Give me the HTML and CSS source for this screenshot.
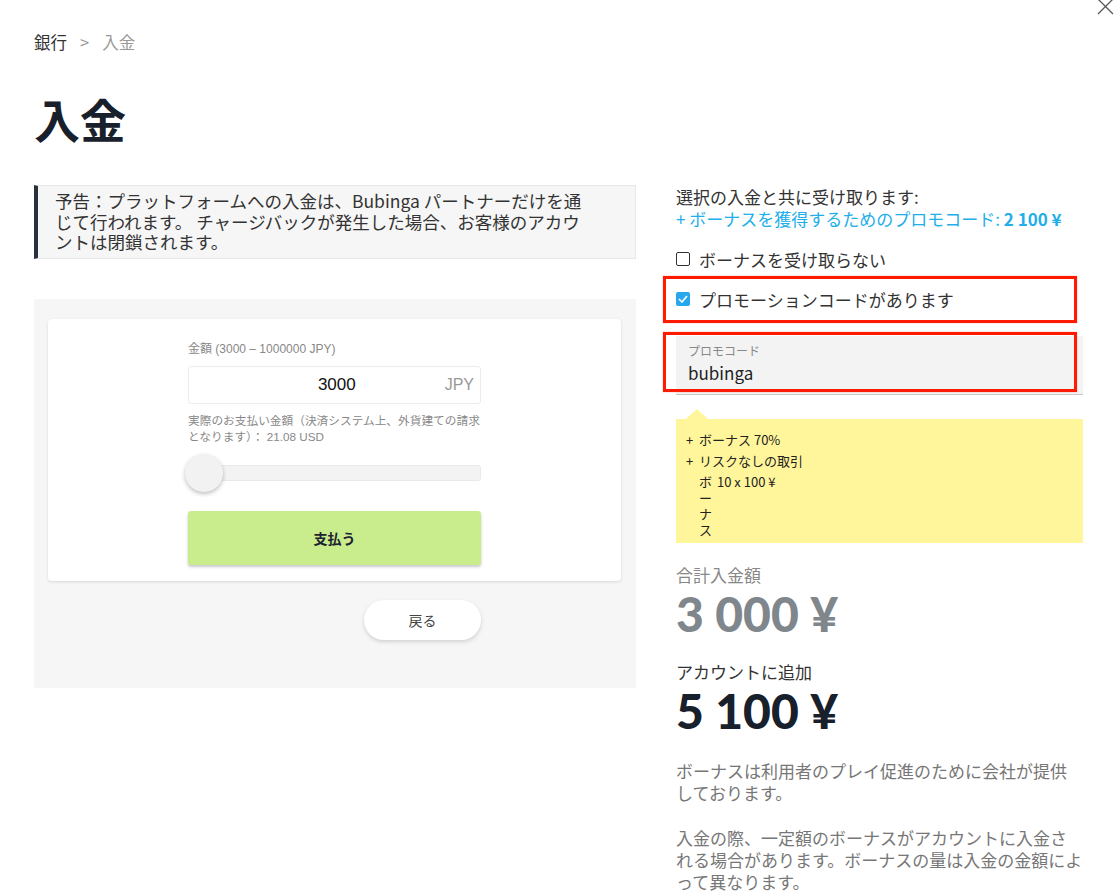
FILE: index.html
```html
<!DOCTYPE html>
<html lang="ja">
<head>
  <meta charset="UTF-8">
  <title>入金</title>
  <link rel="stylesheet" href="styles.css">
</head>
<body>

  <div class="modal">
    <button class="close-btn" aria-label="閉じる">
      <svg width="18" height="18" viewBox="0 0 18 18"><path d="M2 -1 L17 14 M17 -1 L2 14" stroke="#555" stroke-width="1.3" fill="none"/></svg>
    </button>

    <nav class="crumbs">
      <a href="#">銀行</a>
      <span class="sep">&gt;</span>
      <span class="current">入金</span>
    </nav>

    <h1 class="title">入金</h1>

    <div class="columns">
      <section class="left-col">
        <div class="notice">
          <p>予告：プラットフォームへの入金は、Bubinga パートナーだけを通じて行われます。 チャージバックが発生した場合、お客様のアカウントは閉鎖されます。</p>
        </div>

        <div class="pay-panel">
          <div class="pay-card">
            <form class="pay-form" id="payForm">
              <label class="field-label" for="amount">金額 (3000 – 1000000 JPY)</label>
              <div class="amount-box">
                <input id="amount" class="amount-input" value="3000">
                <span class="currency">JPY</span>
              </div>
              <p class="amount-note">実際のお支払い金額（決済システム上、外貨建ての請求となります）： 21.08 USD</p>
              <div class="slider">
                <div class="slider-track"></div>
                <div class="slider-thumb"></div>
              </div>
              <button type="submit" class="pay-btn">支払う</button>
            </form>
          </div>
          <div class="back-row">
            <button class="back-btn">戻る</button>
          </div>
        </div>
      </section>

      <section class="right-col">
        <div class="receive">選択の入金と共に受け取ります:</div>
        <div class="receive promo-link">+ ボーナスを獲得するためのプロモコード: <b>2 100 ¥</b></div>

        <label class="check-row first">
          <span class="box"></span>
          ボーナスを受け取らない
        </label>
        <label class="check-row marked">
          <span class="box checked">
            <svg width="10" height="8" viewBox="0 0 10 8"><path d="M1 4 L4 7 L9 1" stroke="#fff" stroke-width="1.6" fill="none"/></svg>
          </span>
          プロモーションコードがあります
        </label>

        <div class="promo-field marked">
          <span class="promo-label">プロモコード</span>
          <span class="promo-value">bubinga</span>
        </div>

        <div class="bonus-tip">
          <div class="tip-row"><span class="plus">+</span><span>ボーナス 70%</span></div>
          <div class="tip-row"><span class="plus">+</span><span>リスクなしの取引</span></div>
          <div class="tip-row"><span class="plus"></span><span class="narrow">ボーナス</span><span>10 x 100 ¥</span></div>
        </div>

        <div class="sum-label">合計入金額</div>
        <div class="sum total">3 000 ¥</div>
        <div class="sum-label dark">アカウントに追加</div>
        <div class="sum">5 100 ¥</div>

        <p class="info">ボーナスは利用者のプレイ促進のために会社が提供しております。</p>
        <p class="info">入金の際、一定額のボーナスがアカウントに入金される場合があります。ボーナスの量は入金の金額によって異なります。</p>
      </section>
    </div>
  </div>

</body>
</html>
```

FILE: styles.css
```css
body {
  margin: 0;
  background: #fff;
  font-family: "Noto Sans CJK JP", sans-serif;
  color: #333;
  height: 100vh;
  overflow: hidden;
}

.modal {
  position: relative;
  padding: 30px 33px 0 34px;
}

.close-btn {
  position: absolute;
  top: 0;
  right: 2px;
  width: 18px;
  height: 18px;
  padding: 0;
  border: none;
  background: none;
  cursor: pointer;
}

/* breadcrumbs */
.crumbs {
  font-size: 16.5px;
  line-height: 24px;
  display: flex;
  gap: 13px;
}

.crumbs a {
  color: #333;
  text-decoration: none;
}

.crumbs .sep,
.crumbs .current {
  color: #999;
}

.title {
  margin: 36px 0 0;
  font-size: 46px;
  line-height: 56px;
  font-weight: 700;
  color: #18202b;
}

.columns {
  display: flex;
  gap: 40px;
  margin-top: 39px;
}

.left-col {
  width: 602px;
  flex-shrink: 0;
}

.right-col {
  flex: 1;
  padding-top: 1px;
}

/* notice */
.notice {
  background: #f6f6f6;
  border: 1px solid #e6e6e6;
  border-left: 4px solid #27313b;
  padding: 5px 17px;
}

.notice p {
  margin: 0;
  max-width: 527px;
  font-size: 17.5px;
  line-height: 20.5px;
  text-spacing-trim: space-all;
  color: #333;
}

/* payment panel */
.pay-panel {
  margin-top: 40px;
  background: #f6f6f6;
  padding: 20px 15px 48px 14px;
}

.pay-card {
  background: #fff;
  border-radius: 4px;
  box-shadow: 0 1px 3px rgba(0, 0, 0, 0.12);
  padding: 22px 0 16px;
}

.pay-form,
.back-row {
  width: 293px;
  margin: 0 auto;
  font-family: "Liberation Sans", "Noto Sans CJK JP", sans-serif;
}

.field-label {
  display: block;
  font-size: 12px;
  line-height: 16px;
  color: #888;
}

.amount-box {
  margin-top: 9px;
  height: 38px;
  box-sizing: border-box;
  border: 1px solid #ececec;
  border-radius: 3px;
  display: flex;
  align-items: center;
  padding: 0 6px 0 40px;
}

.amount-input {
  flex: 1;
  min-width: 0;
  border: none;
  outline: none;
  text-align: center;
  font-family: inherit;
  font-size: 17px;
  color: #111;
  background: none;
}

.currency {
  font-size: 16px;
  color: #999;
}

.amount-note {
  margin: 9px -1px 0 0;
  font-size: 11.7px;
  line-height: 16px;
  color: #888;
}

.slider {
  position: relative;
  margin-top: 9px;
  height: 38px;
  display: flex;
  align-items: center;
}

.slider-track {
  flex: 1;
  height: 16px;
  box-sizing: border-box;
  background: #f3f3f3;
  border: 1px solid #e9e9e9;
  border-radius: 3px;
}

.slider-thumb {
  position: absolute;
  left: -3px;
  top: 0;
  width: 38px;
  height: 38px;
  border-radius: 50%;
  background: #f2f2f2;
  box-shadow: 0 2px 4px rgba(0, 0, 0, 0.25);
}

.pay-btn {
  display: block;
  width: 100%;
  height: 54px;
  margin-top: 19px;
  border: none;
  border-radius: 3px;
  background: #c9ec8d;
  box-shadow: 0 2px 3px rgba(0, 0, 0, 0.22);
  font-family: "Noto Sans CJK JP", sans-serif;
  font-size: 14px;
  font-weight: 700;
  color: #1d2330;
  cursor: pointer;
}

.back-row {
  display: flex;
  justify-content: flex-end;
  margin-top: 19px;
}

.back-btn {
  width: 117px;
  height: 40px;
  border: none;
  border-radius: 20px;
  background: #fff;
  box-shadow: 0 2px 4px rgba(0, 0, 0, 0.15);
  font-family: "Noto Sans CJK JP", sans-serif;
  font-size: 14px;
  color: #444;
  cursor: pointer;
}

/* bonus column */
.receive {
  font-size: 17px;
  line-height: 22px;
  color: #333;
}

.receive.promo-link {
  color: #22aeea;
}

.promo-link b {
  font-weight: 700;
}

.check-row {
  position: relative;
  display: flex;
  align-items: center;
  gap: 9px;
  height: 40px;
  font-size: 17px;
  color: #333;
}

.check-row.first {
  margin-top: 9px;
}

.box {
  width: 14px;
  height: 14px;
  box-sizing: border-box;
  border: 1.5px solid #333;
  border-radius: 2px;
  display: flex;
  align-items: center;
  justify-content: center;
}

.box.checked {
  border: none;
  background: #27a8ec;
}

/* red frame drawn over the marked controls */
.marked::after {
  content: "";
  position: absolute;
  top: -3px;
  left: -13px;
  right: 6px;
  bottom: -4px;
  border: 3px solid #ff1a00;
  box-shadow: 0 0 1px rgba(255, 0, 0, 0.5);
  pointer-events: none;
}

.promo-field {
  position: relative;
  margin-top: 17px;
  background: #f3f3f3;
  border-bottom: 1px solid #c8c8c8;
  padding: 7px 12px 10px;
  display: flex;
  flex-direction: column;
  gap: 3px;
}

.promo-field.marked::after {
  top: -4px;
  bottom: 2px;
}

.promo-label {
  font-size: 12px;
  line-height: 16px;
  color: #888;
}

.promo-value {
  font-size: 17px;
  line-height: 22px;
  color: #222;
}

.bonus-tip {
  position: relative;
  margin-top: 24px;
  background: #fff59a;
  padding: 13px 10px 5px;
  font-size: 13px;
  line-height: 16px;
  color: #222;
  display: flex;
  flex-direction: column;
  gap: 5px;
}

.bonus-tip::before {
  content: "";
  position: absolute;
  top: -10px;
  left: 10px;
  border-left: 11px solid transparent;
  border-right: 11px solid transparent;
  border-bottom: 10px solid #fff59a;
}

.tip-row {
  display: flex;
  align-items: flex-start;
}

.plus {
  width: 13px;
  flex-shrink: 0;
}

.narrow {
  width: 13px;
  word-break: break-all;
  margin-right: 5px;
}

.sum-label {
  margin-top: 21px;
  font-size: 17px;
  line-height: 22px;
  color: #888;
}

.sum-label.dark {
  margin-top: 19px;
  color: #333;
}

.sum {
  font-family: Lato, "Noto Sans", sans-serif;
  font-weight: 900;
  font-size: 48px;
  line-height: 56px;
  color: #18202b;
}

.sum.total {
  color: #7f868c;
}

.info {
  margin: 21px 0 0;
  font-size: 17px;
  line-height: 22px;
  color: #777;
}

.info + .info {
  margin-top: 23px;
}
```
